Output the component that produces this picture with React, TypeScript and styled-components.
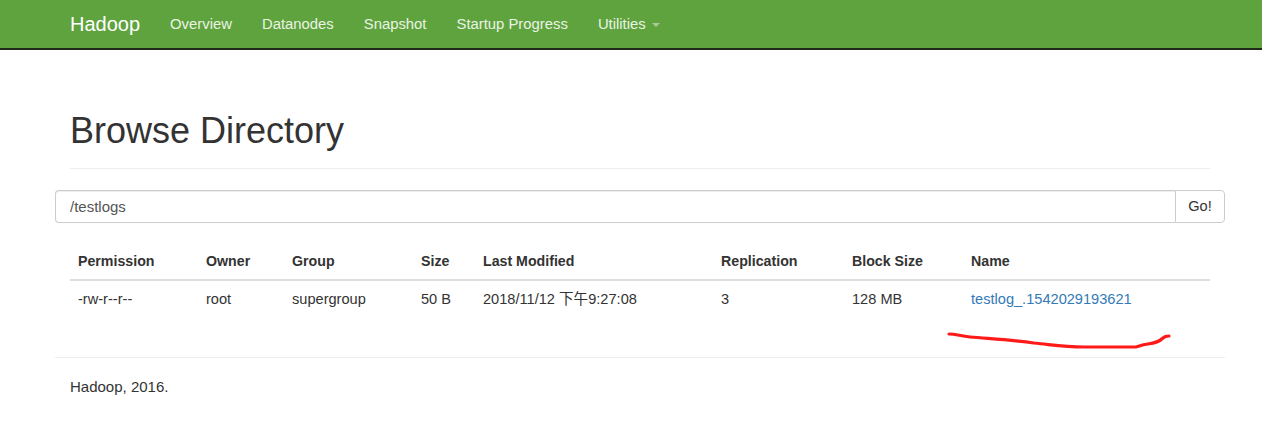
import React from "react";
import styled, { createGlobalStyle } from "styled-components";

const GlobalStyle = createGlobalStyle`
  html, body {
    margin: 0;
    padding: 0;
    background: #fff;
  }
  body {
    font-family: "Liberation Sans", Arial, "Noto Sans CJK SC", sans-serif;
    font-size: 14px;
    line-height: 20px;
    color: #333;
  }
  * {
    box-sizing: border-box;
  }
`;

const Page = styled.div`
  position: relative;
  min-height: 430px;
`;

const Navbar = styled.nav`
  height: 50px;
  background-color: #5fa33e;
  border-bottom: 2px solid #1f2a1a;
`;

const Container = styled.div`
  width: 1170px;
  margin-left: 55px;
  padding: 0 15px;
`;

const NavInner = styled(Container)`
  display: flex;
  align-items: center;
  height: 48px;
  padding: 0;
`;

const Brand = styled.a`
  font-size: 20px;
  color: #fff;
  padding: 0 15px;
  text-decoration: none;
  line-height: 48px;
`;

const NavLink = styled.a`
  display: flex;
  align-items: center;
  gap: 6px;
  padding: 0 15px;
  font-size: 14.85px;
  color: #eaf3e4;
  text-decoration: none;
  line-height: 48px;
`;

const Caret = styled.span`
  display: inline-block;
  width: 0;
  height: 0;
  margin-top: 2px;
  border-left: 4px solid transparent;
  border-right: 4px solid transparent;
  border-top: 4px solid #a9c99a;
`;

const PageHeader = styled.div`
  padding: 61px 0 17px;
  border-bottom: 1px solid #eee;
`;

const Title = styled.h1`
  margin: 0;
  font-family: "Liberation Sans", Arial, sans-serif;
  font-weight: 400;
  font-size: 36px;
  line-height: 39.6px;
  color: #333;
`;

const Row = styled.div`
  margin: 0 -15px;
`;

const InputGroup = styled.div`
  display: flex;
  margin-top: 21px;
  height: 33px;
`;

const PathInput = styled.input`
  flex: 1;
  height: 33px;
  padding: 6px 14px;
  font-family: inherit;
  font-size: 15px;
  color: #555;
  border: 1px solid #ccc;
  border-right: none;
  border-radius: 4px 0 0 4px;
  box-shadow: inset 0 1px 1px rgba(0, 0, 0, 0.075);
  outline: none;
`;

const GoButton = styled.button`
  width: 50px;
  height: 33px;
  font-family: inherit;
  font-size: 14.6px;
  color: #333;
  background: #fff;
  border: 1px solid #ccc;
  border-radius: 0 4px 4px 0;
`;

const Table = styled.table`
  width: 100%;
  margin-top: 20px;
  border-collapse: collapse;
  table-layout: fixed;
`;

const Th = styled.th<{ $width?: number }>`
  width: ${p => (p.$width ? `${p.$width}px` : "auto")};
  text-align: left;
  font-weight: 700;
  font-size: 14.2px;
  padding: 8px;
  line-height: 20px;
  border-bottom: 2px solid #ddd;
`;

const Td = styled.td`
  padding: 8px;
  font-size: 14.6px;
  line-height: 20px;
  white-space: nowrap;
`;

const FileLink = styled.a`
  color: #337ab7;
  text-decoration: none;
`;

const Divider = styled.hr`
  margin: 40px 0 0;
  border: 0;
  border-top: 1px solid #eee;
`;

const Footer = styled.p`
  margin: 19px 0 0;
  font-size: 15px;
`;

const Annotation = styled.svg`
  position: absolute;
  left: 944px;
  top: 328px;
  pointer-events: none;
`;

const columns: [string, number?][] = [
  ["Permission", 128],
  ["Owner", 86],
  ["Group", 129],
  ["Size", 62],
  ["Last Modified", 238],
  ["Replication", 131],
  ["Block Size", 119],
  ["Name"],
];

export default function App() {
  return (
    <Page>
      <GlobalStyle />
      <Navbar>
        <NavInner>
          <Brand>Hadoop</Brand>
          <NavLink>Overview</NavLink>
          <NavLink>Datanodes</NavLink>
          <NavLink>Snapshot</NavLink>
          <NavLink>Startup Progress</NavLink>
          <NavLink>
            Utilities <Caret />
          </NavLink>
        </NavInner>
      </Navbar>
      <Container>
        <PageHeader>
          <Title>Browse Directory</Title>
        </PageHeader>
        <Row>
          <InputGroup>
            <PathInput defaultValue="/testlogs" />
            <GoButton>Go!</GoButton>
          </InputGroup>
        </Row>
        <Table>
          <thead>
            <tr>
              {columns.map(([label, width]) => (
                <Th key={label} $width={width}>
                  {label}
                </Th>
              ))}
            </tr>
          </thead>
          <tbody>
            <tr>
              <Td>-rw-r--r--</Td>
              <Td>root</Td>
              <Td>supergroup</Td>
              <Td>50 B</Td>
              <Td>2018/11/12 下午9:27:08</Td>
              <Td>3</Td>
              <Td>128 MB</Td>
              <Td>
                <FileLink>testlog_.1542029193621</FileLink>
              </Td>
            </tr>
          </tbody>
        </Table>
        <Row>
          <Divider />
        </Row>
        <Footer>Hadoop, 2016.</Footer>
      </Container>
      <Annotation width="230" height="26" viewBox="0 0 230 26">
        <path
          d="M5 6 C12 6 16 8 26 9 C50 11 70 12 90 15 C110 17 120 19 140 19 C160 19 180 19 192 19 C196 18 197 17 204 16 C212 15 216 13 219 10 C221 8 223 8 225 8"
          fill="none"
          stroke="#ff1a1a"
          strokeWidth="3.2"
          strokeLinecap="round"
        />
      </Annotation>
    </Page>
  );
}
